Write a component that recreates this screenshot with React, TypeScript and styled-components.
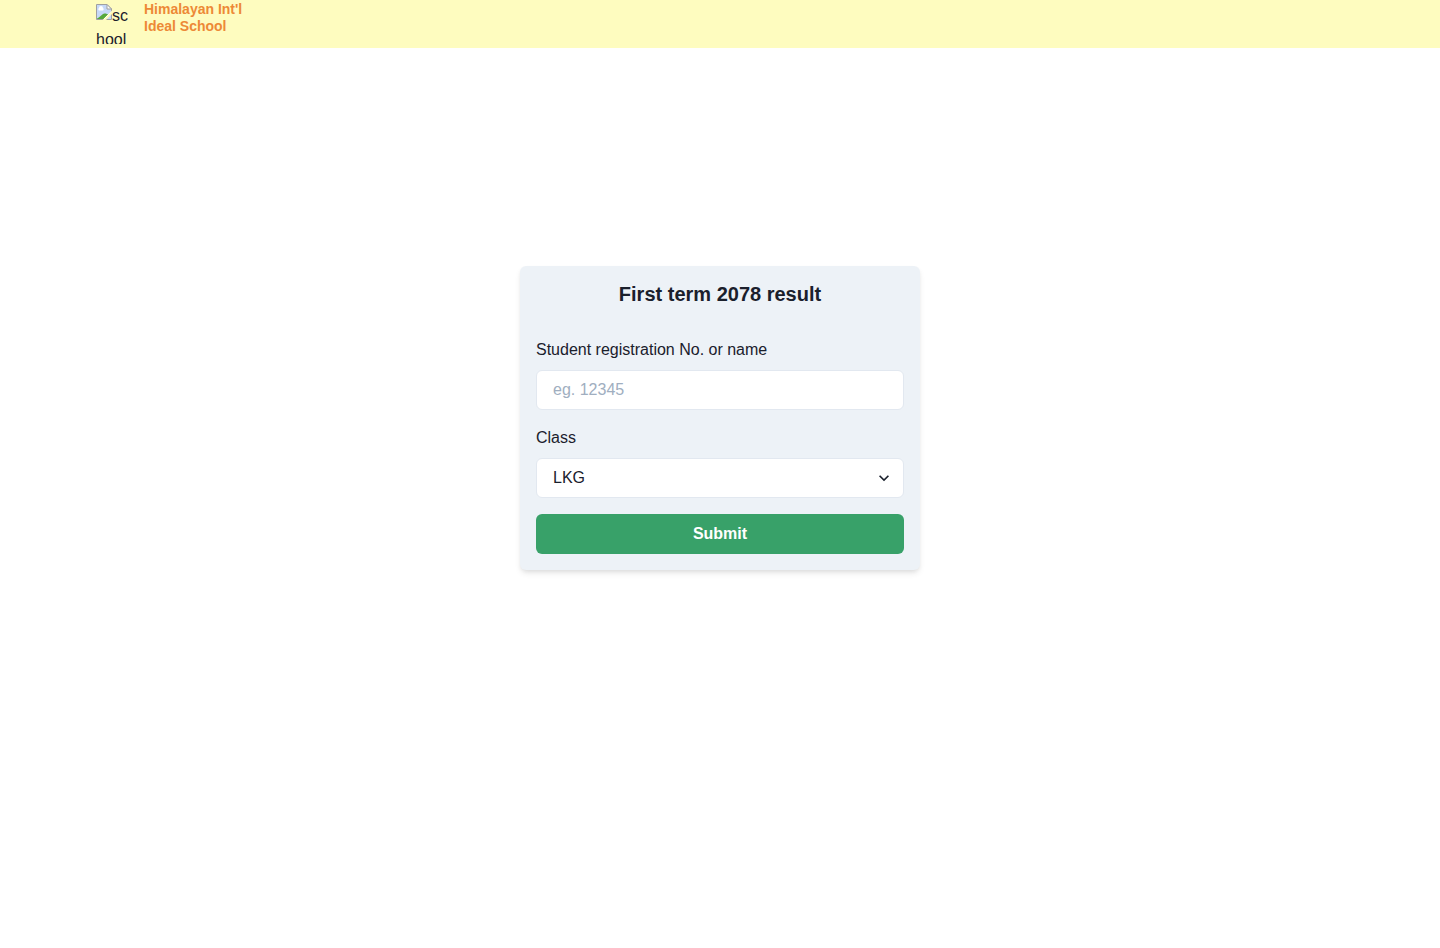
import React from "react";
import styled, { createGlobalStyle } from "styled-components";

const GlobalStyle = createGlobalStyle`
  *, *::before, *::after { box-sizing: border-box; }
  body {
    margin: 0;
    background: #fff;
    color: #1a202c;
    font-family: "Liberation Sans", Arial, sans-serif;
    font-size: 16px;
    line-height: 24px;
  }
`;

const Header = styled.header`
  display: flex;
  gap: 16px;
  height: 48px;
  padding: 0 96px;
  background: #fefcbf;
`;

const Logo = styled.span`
  width: 32px;
  height: 40px;
  margin-top: 4px;
  overflow: hidden;
  word-break: break-all;
`;

const LogoIcon = styled.svg`
  float: left;
  width: 16px;
  height: 16px;
`;

const SchoolName = styled.h1`
  width: 112px;
  margin: 0;
  padding-top: 1px;
  color: #ed8936;
  font-size: 14px;
  font-weight: 700;
  line-height: 17px;
`;

const Main = styled.main`
  display: flex;
  align-items: center;
  justify-content: center;
  min-height: calc(100vh - 208px);
`;

const Card = styled.form`
  display: flex;
  flex-direction: column;
  gap: 16px;
  width: 100%;
  max-width: 400px;
  padding: 16px;
  border-radius: 6px;
  background: #edf2f7;
  box-shadow: 0 4px 6px -1px rgba(0, 0, 0, 0.1), 0 2px 4px -1px rgba(0, 0, 0, 0.06);
`;

const Title = styled.h2`
  margin: 0 0 16px;
  font-size: 20px;
  font-weight: 700;
  line-height: 24px;
  text-align: center;
`;

const Field = styled.div`
  display: flex;
  flex-direction: column;
  gap: 8px;
`;

const controlStyle = `
  width: 100%;
  height: 40px;
  padding: 0 16px;
  border: 1px solid #e2e8f0;
  border-radius: 6px;
  background: #fff;
  color: inherit;
  font: inherit;
`;

const TextInput = styled.input`
  ${controlStyle}
  &::placeholder { color: #a0aec0; opacity: 1; }
`;

const SelectBox = styled.div`
  position: relative;
`;

const Select = styled.select`
  ${controlStyle}
  display: block;
  padding-right: 32px;
  appearance: none;
`;

const Chevron = styled.svg`
  position: absolute;
  top: 10px;
  right: 10px;
  width: 20px;
  height: 20px;
  pointer-events: none;
`;

const SubmitButton = styled.button`
  height: 40px;
  border: 0;
  border-radius: 6px;
  background: #38a169;
  color: #fff;
  font: inherit;
  font-weight: 700;
  cursor: pointer;
`;

export default function App() {
  return (
    <>
      <GlobalStyle />
      <Header>
        <Logo>
          <LogoIcon viewBox="0 0 16 16" aria-hidden="true">
            <path d="M0.5 0.5H11L15.5 5V15.5H0.5Z" fill="#c6d8f8" />
            <path d="M3 6.500a1.500 1.500 0 0 1 0-2.500a2 2 0 0 1 4 0a1.500 1.500 0 0 1 0 2.500Z" fill="#fff" />
            <path d="M1 15V14.500C4 13.500 6 10 8.500 9.500C10.500 9.500 11.500 10 12.500 11L8.500 15Z" fill="#56a83c" />
            <path d="M0.5 0.5H11L15.500 5V15.500H0.5Z" fill="none" stroke="#a0a0a0" />
            <path d="M11 0.5V5H15.500Z" fill="#fff" stroke="#a0a0a0" />
            <path d="M16 6.500L6.500 16H10L16 10Z" fill="#fefcbf" />
            <path d="M14.500 8.500L8 15" stroke="#fffef0" />
          </LogoIcon>
          school
        </Logo>
        <SchoolName>Himalayan Int'l Ideal School</SchoolName>
      </Header>
      <Main>
        <Card onSubmit={(event: React.FormEvent) => event.preventDefault()}>
          <Title>First term 2078 result</Title>
          <Field>
            <label htmlFor="student">Student registration No. or name</label>
            <TextInput id="student" placeholder="eg. 12345" />
          </Field>
          <Field>
            <label htmlFor="class">Class</label>
            <SelectBox>
              <Select id="class" defaultValue="LKG">
                <option value="LKG">LKG</option>
              </Select>
              <Chevron viewBox="0 0 24 24" aria-hidden="true">
                <path fill="currentColor" d="M16.59 8.59L12 13.17 7.41 8.59 6 10l6 6 6-6z" />
              </Chevron>
            </SelectBox>
          </Field>
          <SubmitButton type="submit">Submit</SubmitButton>
        </Card>
      </Main>
    </>
  );
}
